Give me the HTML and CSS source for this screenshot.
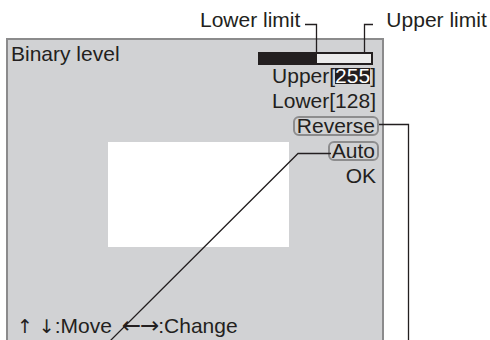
FILE: index.html
```html
<!DOCTYPE html>
<html>
<head>
  <title>Binary level</title>
  <link rel="stylesheet" href="styles.css">
</head>
<body>
<div class="page">
  <div class="callouts">
    <span class="callout-lower">Lower limit</span>
    <span class="callout-upper">Upper limit</span>
  </div>

  <div class="panel">
    <div class="title-row">
      <div class="title">Binary level</div>
      <div class="level-bar"><div class="level-fill"></div></div>
    </div>

    <div class="body-row">
      <div class="preview"></div>
      <ul class="menu">
        <li>Upper[<span class="selected">255</span>]</li>
        <li>Lower[128]</li>
        <li><span class="option">Reverse</span></li>
        <li><span class="option">Auto</span></li>
        <li>OK</li>
      </ul>
    </div>

    <div class="hint"><span class="arrow">↑</span> <span class="arrow">↓</span>:Move <span class="arrow wide">←→</span>:Change</div>
  </div>

  <!-- leader lines for the callouts -->
  <svg class="leaders" width="490" height="340" viewBox="0 0 490 340">
    <path d="M305 24.5 H316.5 V52" />
    <path d="M373 24.5 H364.5 V52" />
    <path d="M379 124.5 H408.5 V340" />
    <path d="M331 153.5 H298 L110 341" />
  </svg>
</div>
</body>
</html>
```

FILE: styles.css
```css
/* Binary level screen with callouts */
html, body {
  margin: 0;
  height: 340px;
  overflow: hidden;
  background: #fff;
}

body {
  font-family: "Liberation Sans", Arial, Helvetica, sans-serif;
  font-size: 21px;
  line-height: 25px;
  color: #231f20;
}

.page {
  position: relative;
  width: 490px;
  height: 340px;
}

.callouts {
  display: flex;
  height: 38px;
  padding-top: 7px;
  box-sizing: border-box;
}

.callout-lower {
  margin-left: 200px;
}

.callout-upper {
  margin-left: 86px;
}

.panel {
  margin-left: 6px;
  width: 378px;
  height: 330px;
  box-sizing: border-box;
  border: 2px solid #8b8b8c;
  background-color: #d1d2d4;
  padding: 0 3px 0 3px;
}

.title-row {
  display: flex;
  justify-content: space-between;
  align-items: flex-start;
}

.title {
  padding-top: 1px;
}

.level-bar {
  display: flex;
  width: 115px;
  height: 13px;
  box-sizing: border-box;
  margin-top: 12px;
  margin-right: 6px;
  border: 2px solid #231f20;
  background-color: #ececec;
}

.level-fill {
  width: 57px;
  background-color: #231f20;
}

.body-row {
  display: flex;
  margin-top: -3px;
}

.preview {
  flex: none;
  width: 181px;
  height: 105px;
  margin-top: 79px;
  margin-left: 97px;
  /* hangs under the upper menu entries */
  margin-right: -40px;
  background-color: #fff;
}

.menu {
  list-style: none;
  margin: 0 0 0 auto;
  padding: 0;
  text-align: right;
}

.menu li {
  height: 25px;
  padding-right: 3px;
  white-space: nowrap;
}

.selected {
  display: inline-block;
  line-height: 16px;
  background-color: #231f20;
  color: #fff;
}

.option {
  display: inline-block;
  line-height: 16px;
  padding: 0 2px;
  margin-right: -3px;
  border: 2px solid #8d8d8e;
  border-radius: 6px;
}

.hint {
  margin-top: 66px;
  padding-left: 6px;
  white-space: nowrap;
}

.arrow {
  font-family: "DejaVu Sans", sans-serif;
  font-size: 19px;
}

.arrow.wide {
  margin-left: 4px;
  letter-spacing: -1px;
  font-size: 23px;
}

.leaders {
  position: absolute;
  top: 0;
  left: 0;
  pointer-events: none;
}

.leaders path {
  fill: none;
  stroke: #231f20;
  stroke-width: 1.3;
}
```
